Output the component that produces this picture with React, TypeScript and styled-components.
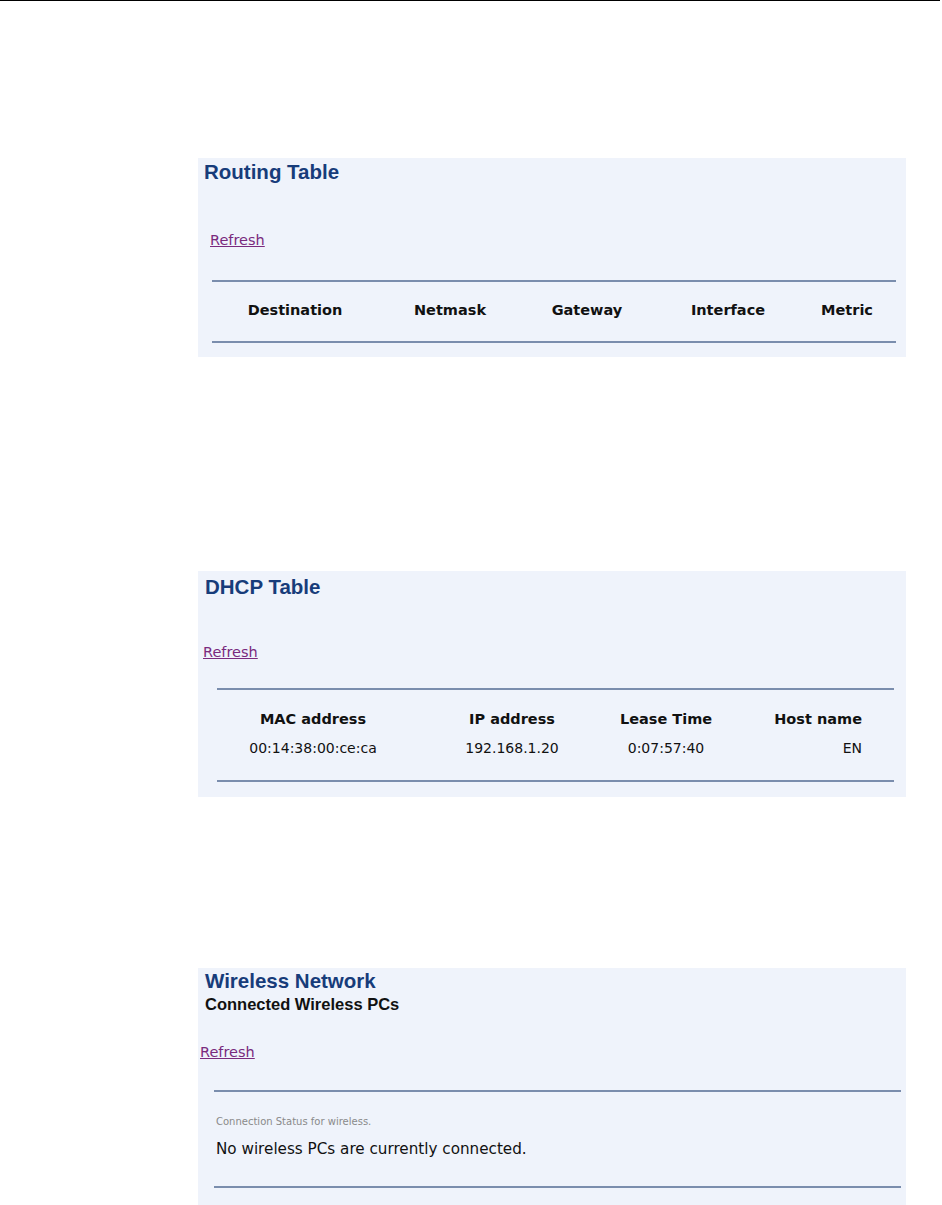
import React from 'react'
import styled, { createGlobalStyle } from 'styled-components'

const GlobalStyle = createGlobalStyle`
  html, body {
    margin: 0;
    padding: 0;
    background: #ffffff;
  }
  body {
    font-family: "DejaVu Sans", Verdana, sans-serif;
  }
`

const Page = styled.div`
  width: 942px;
  height: 1205px;
  overflow: hidden;
  box-sizing: border-box;
`

const TopRule = styled.div`
  width: 940px;
  border-top: 1px solid #000;
`

const Stack = styled.div`
  display: flex;
  flex-direction: column;
  padding-left: 198px;
`

const Panel = styled.section<{ top: number; height: number }>`
  margin-top: ${(p) => p.top}px;
  width: 708px;
  height: ${(p) => p.height}px;
  background: #eff3fb;
  display: flex;
  flex-direction: column;
  box-sizing: border-box;
`

const Title = styled.h2<{ left: number; top: number }>`
  margin: ${(p) => p.top}px 0 0 ${(p) => p.left}px;
  font-family: "Liberation Sans", Arial, sans-serif;
  font-weight: bold;
  font-size: 20.5px;
  line-height: 24px;
  color: #173c7a;
`

const SubTitle = styled.div`
  margin: 1px 0 0 7px;
  font-family: "Liberation Sans", Arial, sans-serif;
  font-weight: bold;
  font-size: 16.5px;
  line-height: 20px;
  color: #111;
`

const RefreshLink = styled.a<{ left: number; top: number }>`
  display: block;
  align-self: flex-start;
  margin: ${(p) => p.top}px 0 0 ${(p) => p.left}px;
  font-size: 14.5px;
  line-height: 18px;
  color: #7a2a7e;
  text-decoration: underline;
  cursor: pointer;
`

const TableBox = styled.div<{ left: number; right: number; top: number }>`
  margin: ${(p) => p.top}px ${(p) => p.right}px 0 ${(p) => p.left}px;
  border-top: 2px solid #7a8dad;
  border-bottom: 2px solid #7a8dad;
`

const Row = styled.div<{ cols: string; pad: number }>`
  display: grid;
  grid-template-columns: ${(p) => p.cols};
  padding-top: ${(p) => p.pad}px;
  font-size: 14.5px;
  line-height: 18px;
  color: #111;
`

const Cell = styled.div<{ bold?: boolean; right?: boolean }>`
  text-align: ${(p) => (p.right ? 'right' : 'center')};
  font-weight: ${(p) => (p.bold ? 'bold' : 'normal')};
  font-size: ${(p) => (p.bold ? '14.5px' : '14px')};
  white-space: nowrap;
`

const Spacer = styled.div<{ h: number }>`
  height: ${(p) => p.h}px;
`

const Notes = styled.div`
  display: flex;
  flex-direction: column;
  padding-left: 2px;
`

const Note = styled.div<{ small?: boolean; top: number }>`
  margin-top: ${(p) => p.top}px;
  font-size: ${(p) => (p.small ? '10px' : '15.2px')};
  line-height: ${(p) => (p.small ? '14px' : '18px')};
  color: ${(p) => (p.small ? '#8a8a8a' : '#111')};
`

const routingCols = '166px 144px 130px 152px 86px'
const dhcpCols = '192px 206px 102px 145px'

export default function App() {
  return (
    <>
      <GlobalStyle />
      <Page>
        <TopRule />
        <Stack>
          <Panel top={157} height={199}>
            <Title left={6} top={2}>Routing Table</Title>
            <RefreshLink left={12} top={47}>Refresh</RefreshLink>
            <TableBox left={14} right={10} top={31}>
              <Row cols={routingCols} pad={19}>
                <Cell bold>Destination</Cell>
                <Cell bold>Netmask</Cell>
                <Cell bold>Gateway</Cell>
                <Cell bold>Interface</Cell>
                <Cell bold>Metric</Cell>
              </Row>
              <Spacer h={22} />
            </TableBox>
          </Panel>

          <Panel top={214} height={226}>
            <Title left={7} top={4}>DHCP Table</Title>
            <RefreshLink left={5} top={44}>Refresh</RefreshLink>
            <TableBox left={19} right={12} top={27}>
              <Row cols={dhcpCols} pad={20}>
                <Cell bold>MAC address</Cell>
                <Cell bold>IP address</Cell>
                <Cell bold>Lease Time</Cell>
                <Cell bold right>Host name</Cell>
              </Row>
              <Row cols={dhcpCols} pad={11}>
                <Cell>00:14:38:00:ce:ca</Cell>
                <Cell>192.168.1.20</Cell>
                <Cell>0:07:57:40</Cell>
                <Cell right>EN</Cell>
              </Row>
              <Spacer h={23} />
            </TableBox>
          </Panel>

          <Panel top={171} height={240}>
            <Title left={7} top={1}>Wireless Network</Title>
            <SubTitle>Connected Wireless PCs</SubTitle>
            <RefreshLink left={2} top={29}>Refresh</RefreshLink>
            <TableBox left={16} right={5} top={29}>
              <Notes>
                <Note small top={23}>Connection Status for wireless.</Note>
                <Note top={11}>No wireless PCs are currently connected.</Note>
              </Notes>
              <Spacer h={28} />
            </TableBox>
          </Panel>
        </Stack>
      </Page>
    </>
  )
}
